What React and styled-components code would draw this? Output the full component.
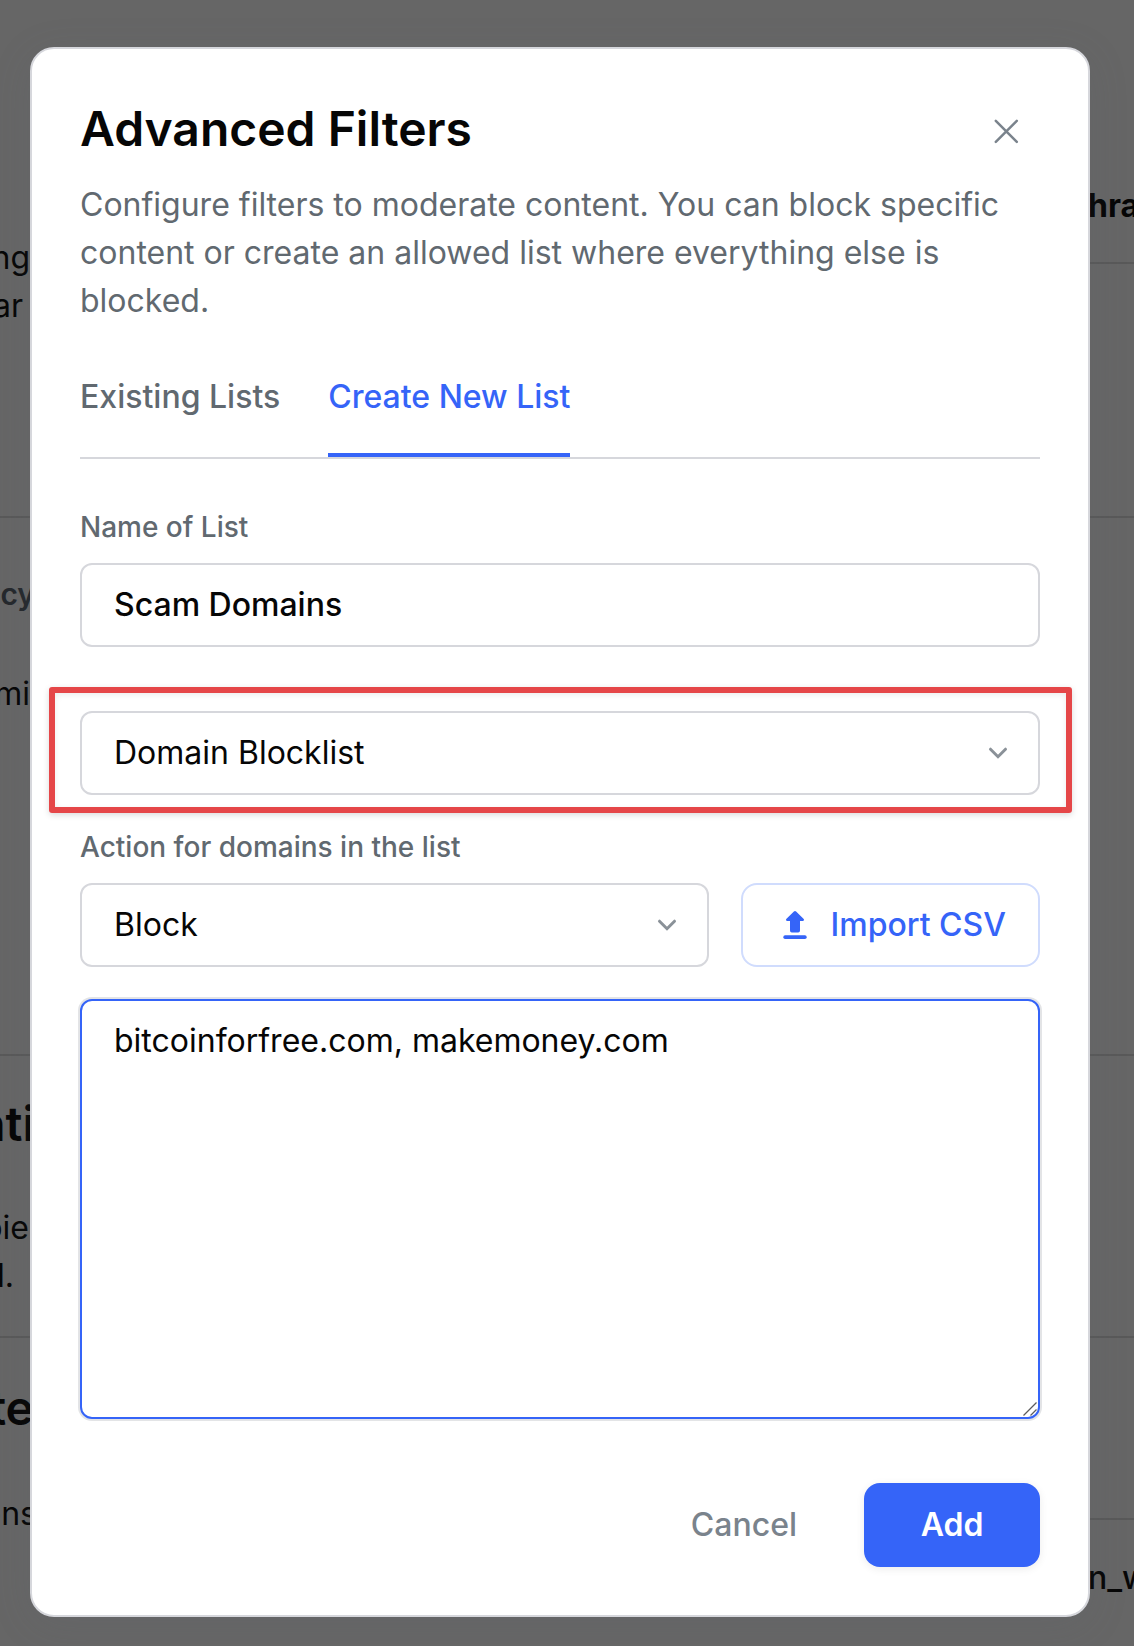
import React, { useState } from "react";
import styled, { createGlobalStyle } from "styled-components";

const leftRows = [
  { text: "ing", top: 234 },
  { text: "lar", top: 282, end: 7 },
  { line: true, top: 516 },
  { text: "ncy", top: 570, size: 30, weight: 600, color: "#24282c", end: -5 },
  { text: "mi", top: 670, end: 0 },
  { line: true, top: 1054 },
  { text: "nti", top: 1100, size: 48, weight: 600, end: -5 },
  { text: "pie", top: 1204, end: 1 },
  { text: "d.", top: 1252, end: 16 },
  { line: true, top: 1336 },
  { text: "te", top: 1384, size: 48, weight: 600, end: -4 },
  { text: "ons", top: 1490, end: -7 },
];

const rightRows = [
  { text: "hra", top: 182, weight: 700, start: -2 },
  { line: true, top: 262 },
  { line: true, top: 516 },
  { line: true, top: 1054 },
  { line: true, top: 1336 },
  { line: true, top: 1518 },
  { text: "n_w", top: 1554, weight: 500, start: -2 },
];

// turn page offsets into the gap above each row
const withGaps = (rows) => {
  let y = 0;
  return rows.map((row) => {
    const gap = row.top - y;
    y = row.top + (row.line ? 2 : 48);
    return { ...row, gap };
  });
};

function PageColumn({ rows, side }) {
  return (
    <Column $side={side}>
      {withGaps(rows).map((row) =>
        row.line ? (
          <Divider key={row.top} $gap={row.gap} />
        ) : (
          <PageText
            key={row.top}
            $gap={row.gap}
            $size={row.size}
            $weight={row.weight}
            $color={row.color}
            $start={row.start}
            $end={row.end}
          >
            {row.text}
          </PageText>
        )
      )}
    </Column>
  );
}

const Chevron = () => (
  <svg width="20" height="14" viewBox="0 0 20 14" fill="none">
    <path
      d="M2.5 3.2L10 10.7L17.5 3.2"
      stroke="#8a9198"
      strokeWidth="3"
      strokeLinecap="round"
    />
  </svg>
);

export default function App() {
  const [tab, setTab] = useState("create");
  const [name, setName] = useState("Scam Domains");
  const [domains, setDomains] = useState("bitcoinforfree.com, makemoney.com");

  return (
    <Page>
      <GlobalStyle />
      <PageColumn rows={leftRows} side="left" />
      <Modal>
        <Header>
          <Title>Advanced Filters</Title>
          <CloseBtn aria-label="Close">
            <svg width="26" height="26" viewBox="0 0 26 26" fill="none">
              <path
                d="M2.8 2.8L23.8 23.8M23.8 2.8L2.8 23.8"
                stroke="#7a838c"
                strokeWidth="2.5"
                strokeLinecap="round"
              />
            </svg>
          </CloseBtn>
        </Header>
        <Description>
          Configure filters to moderate content. You can block specific content
          or create an allowed list where everything else is blocked.
        </Description>

        <Tabs>
          <Tab $active={tab === "existing"} onClick={() => setTab("existing")}>
            Existing Lists
          </Tab>
          <Tab $active={tab === "create"} onClick={() => setTab("create")}>
            Create New List
          </Tab>
        </Tabs>

        <Label>Name of List</Label>
        <Input value={name} onChange={(e) => setName(e.target.value)} />

        <HighlightArea>
          <Select>
            Domain Blocklist
            <Chevron />
          </Select>
          <Highlight />
        </HighlightArea>

        <Label>Action for domains in the list</Label>
        <ActionRow>
          <Select>
            Block
            <Chevron />
          </Select>
          <ImportBtn>
            <svg width="24" height="28" viewBox="0 0 24 28" fill="#3564f8">
              <path d="M10.9 0.5Q12 -0.3 13.1 0.5L20.5 7.7Q22 9.7 19.8 9.9H17V19.6Q17 21.5 15.2 21.5H8.8Q7 21.5 7 19.6V9.9H4.2Q2 9.7 3.5 7.7Z" />
              <rect x="0.3" y="24.2" width="23.4" height="3.8" rx="1.8" />
            </svg>
            Import CSV
          </ImportBtn>
        </ActionRow>

        <DomainBox>
          <DomainText
            value={domains}
            spellCheck={false}
            onChange={(e) => setDomains(e.target.value)}
          />
          <Grip width="14" height="14" viewBox="0 0 14 14" fill="none">
            <path
              d="M0.5 13.5L13.5 0.5M7.5 13.5L13.5 7.5"
              stroke="#5c5c5c"
              strokeWidth="1.3"
            />
          </Grip>
        </DomainBox>

        <Footer>
          <CancelBtn>Cancel</CancelBtn>
          <AddBtn>Add</AddBtn>
        </Footer>
      </Modal>
      <PageColumn rows={rightRows} side="right" />
    </Page>
  );
}

const GlobalStyle = createGlobalStyle`
  * {
    box-sizing: border-box;
  }
  body {
    margin: 0;
    background: #666666;
  }
  body, button, input, textarea {
    font-family: Inter, "Liberation Sans", sans-serif;
    font-size: 32px;
    line-height: 48px;
  }
`;

const Page = styled.div`
  display: grid;
  grid-template-columns: 30px 1060px 44px;
  width: 1134px;
  height: 1646px;
  overflow: hidden;
  background: #666666;
`;

const Column = styled.div`
  display: flex;
  flex-direction: column;
  align-items: ${(props) => (props.$side === "left" ? "flex-end" : "flex-start")};
  min-width: 0;
  overflow: hidden;
`;

const Divider = styled.div`
  flex: none;
  width: 100%;
  height: 2px;
  margin-top: ${(props) => props.$gap}px;
  background: #595959;
`;

const PageText = styled.div`
  flex: none;
  height: 48px;
  margin-top: ${(props) => props.$gap}px;
  margin-left: ${(props) => props.$start || 0}px;
  margin-right: ${(props) => props.$end || 0}px;
  font-size: ${(props) => props.$size || 32}px;
  font-weight: ${(props) => props.$weight || 400};
  color: ${(props) => props.$color || "#060606"};
  white-space: nowrap;
`;

const Modal = styled.div`
  height: 1570px;
  margin-top: 47px;
  padding: 48px;
  background: white;
  border: 2px solid #d6d7dc;
  border-radius: 24px;
  box-shadow: 0 8px 40px rgba(90, 100, 110, 0.14);
  z-index: 1;
`;

const Header = styled.div`
  display: flex;
  justify-content: space-between;
  height: 64px;
`;

const Title = styled.h1`
  margin: 0;
  font-size: 48px;
  font-weight: 600;
  line-height: 64px;
  color: #060606;
`;

const CloseBtn = styled.button`
  display: flex;
  align-items: center;
  height: 68px;
  padding: 0 21px;
  background: transparent;
  border: none;
`;

const Description = styled.p`
  margin: 20px 0 0;
  color: #616970;
`;

const Tabs = styled.div`
  display: flex;
  gap: 48px;
  margin-top: 48px;
  border-bottom: 2px solid #d6d7dc;
`;

const Tab = styled.button`
  height: 84px;
  padding: 0 0 32px;
  background: none;
  border: none;
  border-bottom: 4px solid ${(props) => (props.$active ? "#3564f8" : "transparent")};
  font-weight: 500;
  color: ${(props) => (props.$active ? "#3564f8" : "#616970")};
`;

const Label = styled.div`
  margin: 48px 0 16px;
  font-size: 28px;
  font-weight: 500;
  line-height: 40px;
  color: #616970;
`;

const Input = styled.input`
  display: block;
  width: 100%;
  height: 84px;
  padding: 0 32px 2px;
  border: 2px solid #d6d7dc;
  border-radius: 12px;
  outline: none;
  font-weight: 500;
  color: #060606;
`;

const Select = styled.div`
  display: flex;
  flex: 1;
  align-items: center;
  justify-content: space-between;
  height: 84px;
  padding: 0 30px 0 32px;
  border: 2px solid #d6d7dc;
  border-radius: 12px;
  color: #060606;
`;

const HighlightArea = styled.div`
  position: relative;
  margin: 64px 0 -16px;
`;

const Highlight = styled.div`
  position: absolute;
  inset: -24px -32px -18px -31px;
  border: 6px solid #e54648;
  border-radius: 3px;
  box-shadow: 0 2px 6px rgba(0, 0, 0, 0.15), inset 0 2px 6px rgba(0, 0, 0, 0.08);
  pointer-events: none;
`;

const ActionRow = styled.div`
  display: flex;
  gap: 32px;
`;

const ImportBtn = styled.button`
  display: flex;
  align-items: center;
  gap: 23.5px;
  width: 299px;
  height: 84px;
  padding: 0 0 0 40px;
  background: white;
  border: 2px solid #d0dcfd;
  border-radius: 16px;
  font-weight: 500;
  color: #3564f8;
  white-space: nowrap;
`;

const DomainBox = styled.div`
  position: relative;
  margin-top: 32px;
`;

const DomainText = styled.textarea`
  display: block;
  width: 100%;
  height: 420px;
  padding: 16px 32px;
  border: 2px solid #3564f8;
  border-radius: 12px;
  outline: none;
  box-shadow: 0 0 0 2px #e3e4e6;
  color: #060606;
  resize: none;
`;

const Grip = styled.svg`
  position: absolute;
  right: 3px;
  bottom: 3px;
`;

const Footer = styled.div`
  display: flex;
  justify-content: flex-end;
  gap: 67px;
  margin-top: 64px;
`;

const CancelBtn = styled.button`
  height: 84px;
  padding: 0;
  background: none;
  border: none;
  font-weight: 500;
  color: #7a838c;
`;

const AddBtn = styled.button`
  width: 176px;
  height: 84px;
  background: #3564f8;
  border: none;
  border-radius: 16px;
  box-shadow: 0 2px 8px rgba(0, 0, 0, 0.08);
  font-weight: 600;
  color: white;
`;
